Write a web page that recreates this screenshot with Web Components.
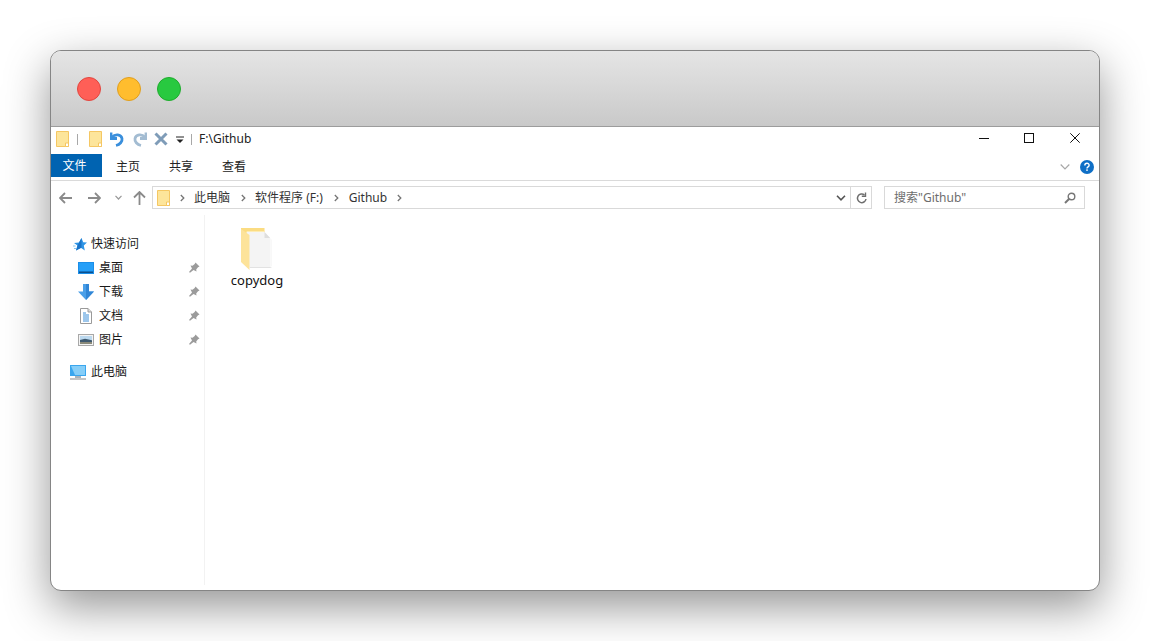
<!DOCTYPE html>
<html lang="zh"><head><meta charset="utf-8"><title>Github</title>
<style>
html,body{margin:0;padding:0;background:#fff;width:1150px;height:641px;overflow:hidden}
body{font:12px/16px "Noto Sans","Noto Sans CJK SC",sans-serif;color:#1a1a1a}
</style></head><body>
<mac-window>
  <quick-bar path="F:\Github"></quick-bar>
  <ribbon-tabs></ribbon-tabs>
  <nav-bar></nav-bar>
  <div style="display:flex;flex:1;min-height:0">
    <side-nav>
      <side-item label="快速访问" icon="star" group></side-item>
      <side-item label="桌面" icon="desktop" pin></side-item>
      <side-item label="下载" icon="download" pin></side-item>
      <side-item label="文档" icon="doc" pin></side-item>
      <side-item label="图片" icon="pic" pin></side-item>
      <side-item label="此电脑" icon="pc" group style="margin-top:8px"></side-item>
    </side-nav>
    <file-area><folder-tile name="copydog"></folder-tile></file-area>
  </div>
</mac-window>
<script>
const FOLDER='<svg width="13" height="16" viewBox="0 0 13 16"><path d="M.5.500h12v15H.5z" fill="#fde59b" stroke="#f5c763"/><path d="M9.500 15.500v-3.500h3v3.500z" fill="#fff" stroke="#f5c763"/></svg>';
const ICONS={
 star:'<svg width="14" height="13" viewBox="0 0 14 13" style="margin-left:3px"><path d="M8.500 0l1.700 4.300 3.800.3-3.200 3 1 4.900-4-2.700L3 12.500l1.500-4.900L1 5l5-.4z" fill="#2f95e6"/><path d="M8.500 0v9.800L3 12.500l1.500-4.900z" fill="#1a74c8"/><path d="M0 8h2.500M1 10.500h2" stroke="#86c8f4"/></svg>',
 desktop:'<svg width="16" height="12" viewBox="0 0 16 12"><rect width="16" height="12" fill="#1b8ee8"/><rect x="1" y="1" width="14" height="8.500" fill="#259ff8"/><rect x="1" y="9.500" width="14" height="1.500" fill="#0b4f8e"/></svg>',
 download:'<svg width="16" height="16" viewBox="0 0 16 16"><path d="M5 0h6v7.500h5L8 16 0 7.500h5z" fill="#4a9fe8"/><path d="M8 0h3v7.500h5L8 16z" fill="#3186d6"/></svg>',
 doc:'<svg width="12" height="16" viewBox="0 0 12 16" style="margin-left:2px"><path d="M.5.500h7.500l3.500 3.500v11.500H.5z" fill="#fff" stroke="#9a9a9a"/><path d="M8 .5v3.500h3.500" fill="#ddd" stroke="#9a9a9a"/><path d="M3 5h3M3 7h6M3 9h6M3 11h6M3 13h6" stroke="#3b8ed8"/></svg>',
 pic:'<svg width="16" height="12" viewBox="0 0 16 12"><rect x=".5" y=".5" width="15" height="11" fill="#f4f4f4" stroke="#a8a8a8"/><rect x="2" y="2" width="12" height="4" fill="#bcd9ef"/><path d="M2 6l5-1.200 7 1.500V10H2z" fill="#3f5a70"/><rect x="2" y="8" width="12" height="2" fill="#8a8a7a"/></svg>',
 pc:'<svg width="16" height="15" viewBox="0 0 16 15"><rect width="16" height="11" fill="#3aa6ee"/><path d="M1 1h14v9H5z" fill="#86cef8"/><rect x="5" y="11" width="6" height="2" fill="#a9b3bb"/><rect y="13" width="16" height="2" fill="#c4c4c4"/></svg>'
};
function def(name,css,html){
  customElements.define(name,class extends HTMLElement{
    connectedCallback(){
      if(this.shadowRoot)return;
      const s=this.attachShadow({mode:'open'});
      s.innerHTML='<style>'+css+'</style>'+(typeof html==='function'?html(this):html);
    }
  });
}
def('mac-window',`
:host{display:flex;flex-direction:column;box-sizing:border-box;width:1050px;height:541px;margin:50px 0 0 50px;background:#fff;border:1px solid #858585;border-radius:11px;box-shadow:0 16px 45px rgba(0,0,0,.42)}
.title{height:76px;flex:none;box-sizing:border-box;border-bottom:1px solid #9c9c9c;border-radius:10px 10px 0 0;background:linear-gradient(#e5e5e5,#c9c9c9);display:flex;align-items:center;gap:16px;padding:1px 0 0 26px}
.d{width:24px;height:24px;box-sizing:border-box;border-radius:50%;border:1px solid}
.r{background:#ff5f57;border-color:#e2463f}.y{background:#ffbd2e;border-color:#e09e1e}.g{background:#28c940;border-color:#1eac2c}
.c{flex:1;display:flex;flex-direction:column;min-height:0;border-radius:0 0 10px 10px;overflow:hidden}
`,`<div class="title"><span class="d r"></span><span class="d y"></span><span class="d g"></span></div><div class="c"><slot></slot></div>`);
def('quick-bar',`
:host{display:flex;align-items:center;height:24px;margin-bottom:3px;flex:none;padding-left:5px;color:#222}
svg{display:block;flex:none}
.sep{width:1px;height:11px;background:#a8a8a8;flex:none}
.ctl{display:flex;margin-left:auto;margin-bottom:1px;align-items:center;padding-right:18px}
span.t{margin-left:7px;white-space:nowrap;font-size:12px}
`,h=>`${FOLDER}<span class="sep" style="margin:0 11px 0 8px"></span>${FOLDER}
<svg style="margin-left:8px" width="14" height="16" viewBox="0 0 14 16"><path d="M1 1.500v6h6" fill="none" stroke="#3a8fdc" stroke-width="2.800"/><path d="M2 6c3-3 9-3 10 1.500 .6 3-2 6-6 7" fill="none" stroke="#3a8fdc" stroke-width="2.800"/></svg>
<svg style="margin-left:9px" width="14" height="16" viewBox="0 0 14 16"><path d="M13 1.500v6H7" fill="none" stroke="#a3bcd2" stroke-width="2.800"/><path d="M12 6C9 3 3 3 2 7.500c-.6 3 2 6 6 7" fill="none" stroke="#a3bcd2" stroke-width="2.800"/></svg>
<svg style="margin-left:7px" width="14" height="14" viewBox="0 0 14 14"><path d="M1.500 1.500l11 11M12.500 1.500l-11 11" stroke="#7f9cb8" stroke-width="3"/></svg>
<svg style="margin-left:8px;margin-top:2px" width="8" height="8" viewBox="0 0 8 8"><path d="M0 1h8" stroke="#222"/><path d="M.5 3.500h7L4 7z" fill="#222"/></svg>
<span class="sep" style="margin-left:7px"></span><span class="t">${h.getAttribute('path')}</span>
<div class="ctl">
<svg style="margin-right:34px" width="11" height="11" viewBox="0 0 11 11"><path d="M0 5.500h10" stroke="#111"/></svg>
<svg style="margin-right:35px" width="11" height="11" viewBox="0 0 11 11"><rect x=".5" y=".5" width="9" height="9" fill="none" stroke="#111"/></svg>
<svg width="11" height="11" viewBox="0 0 11 11"><path d="M.3.300l9.400 9.400M9.700.300l-9.400 9.400" stroke="#111"/></svg>
</div>`);
def('ribbon-tabs',`
:host{display:flex;height:27px;flex:none;box-sizing:border-box;border-bottom:1px solid #dadada;align-items:flex-start;color:#222}
.f{width:51px;height:23px;box-sizing:border-box;padding:1px 4px 0 0;background:#0063b1;color:#fff;display:flex;align-items:center;justify-content:center;margin-right:14px}
.t{height:26px;display:flex;align-items:center;margin-right:29px;white-space:nowrap}
.r{margin-left:auto;display:flex;align-items:center;gap:10px;padding-right:5px;height:26px}
`,`<div class="f">文件</div><div class="t">主页</div><div class="t">共享</div><div class="t">查看</div>
<div class="r"><svg width="10" height="6" viewBox="0 0 10 6"><path d="M.7.500L5 4.800 9.300.500" fill="none" stroke="#a8a8a8" stroke-width="1.200"/></svg>
<svg width="14" height="14" viewBox="0 0 15 15"><circle cx="7.500" cy="7.500" r="7.500" fill="#0f6fc6"/><path d="M5.200 5.800c0-3 4.600-3 4.600-.2 0 1.700-2.300 1.800-2.300 3.400" fill="none" stroke="#fff" stroke-width="1.500"/><rect x="6.700" y="10" width="1.600" height="1.700" fill="#fff"/></svg></div>`);
def('nav-bar',`
:host{display:flex;align-items:center;height:23px;flex:none;margin-top:5px;padding-right:14px;color:#333}
svg{display:block;flex:none}
.addr{display:flex;align-items:center;box-sizing:border-box;width:720px;height:23px;border:1px solid #d9d9d9;margin-left:6px}
.s{margin-left:12px;box-sizing:border-box;flex:1;height:23px;border:1px solid #d9d9d9;display:flex;align-items:center;padding:0 8px 0 9px;color:#6d6d6d}
.s svg{margin-left:auto}
.x{white-space:nowrap}
.v{width:1px;height:21px;background:#d9d9d9}
`,()=>{
 const chev='<svg width="5" height="8" viewBox="0 0 5 8"><path d="M.8 1L3.800 4 .8 7" fill="none" stroke="#777" stroke-width="1.300"/></svg>';
 return `<svg style="margin-left:8px" width="13" height="12" viewBox="0 0 13 12"><path d="M6 1L1 6l5 5M1 6h12" fill="none" stroke="#8a8a8a" stroke-width="1.800"/></svg>
<svg style="margin-left:16px" width="13" height="12" viewBox="0 0 13 12"><path d="M7 1l5 5-5 5M12 6H0" fill="none" stroke="#8a8a8a" stroke-width="1.800"/></svg>
<svg style="margin-left:14px" width="7" height="5" viewBox="0 0 7 5"><path d="M.5.800L3.500 4 6.500.800" fill="none" stroke="#999" stroke-width="1.200"/></svg>
<svg style="margin-left:11px" width="13" height="14" viewBox="0 0 13 14"><path d="M1 6.500l5.500-5.500L12 6.500M6.500 1v13" fill="none" stroke="#8a8a8a" stroke-width="1.800"/></svg>
<div class="addr"><span style="margin-left:4px;display:flex">${FOLDER}</span>
<span style="margin-left:10px;display:flex">${chev}</span><span class="x" style="margin-left:9px">此电脑</span>
<span style="margin-left:11px;display:flex">${chev}</span><span class="x" style="margin-left:9px">软件程序 (F:)</span>
<span style="margin-left:11px;display:flex">${chev}</span><span class="x" style="margin-left:10px">Github</span>
<span style="margin-left:10px;display:flex">${chev}</span>
<svg style="margin-left:auto" width="10" height="6" viewBox="0 0 10 6"><path d="M1 .8L5 4.800 9 .8" fill="none" stroke="#555" stroke-width="1.600"/></svg><span class="v" style="margin:0 5px 0 4px"></span>
<svg style="margin-right:4px" width="11" height="12" viewBox="0 0 11 12"><path d="M8.500 3A4.300 4.300 0 1 0 10 7" fill="none" stroke="#6f6f6f" stroke-width="1.500"/><path d="M9.500 .5v3.800H5.800" fill="none" stroke="#6f6f6f" stroke-width="1.400"/></svg></div>
<div class="s"><span class="x">搜索"Github"</span><svg width="12" height="12" viewBox="0 0 12 12"><circle cx="7.500" cy="4.500" r="3.300" fill="none" stroke="#777" stroke-width="1.400"/><path d="M5 7L1 11" stroke="#777" stroke-width="2"/></svg></div>`});
def('side-nav',`
:host{display:block;box-sizing:border-box;width:154px;flex:none;border-right:1px solid #f2f2f2;margin-top:6px;margin-bottom:5px;padding-top:17px}
`,'<slot></slot>');
def('side-item',`
:host{display:flex;align-items:center;height:24px;color:#1a1a1a;position:relative;white-space:nowrap}
.i{width:17px;display:flex;flex:none;margin-right:4px}
.i svg{display:block;flex:none}
.p{position:absolute;left:138px;top:6px}
`,h=>{
 const g=h.hasAttribute('group');
 const pin=h.hasAttribute('pin')?'<svg class="p" width="11" height="11" viewBox="0 0 11 11"><path d="M6.500.500l4 4-1.500.8-1.800 2.200.3 2L4.500 8 1 10.800 0 10l3-3.500L1.500 3.500l2 .3L5.700 2z" fill="#9b9b9b"/></svg>':'';
 return `<span class="i" style="margin-left:${g?19:27}px">${ICONS[h.getAttribute('icon')]}</span><span>${h.getAttribute('label')}</span>${pin}`;
});
def('file-area',`:host{display:block;flex:1;padding:19px 0 0 26px}`,'<slot></slot>');
def('folder-tile',`
:host{display:inline-flex;flex-direction:column;align-items:center;width:52px;white-space:nowrap}
svg{display:block}
span{margin-top:1px;font-size:13px;color:#111}
`,h=>`<svg width="32" height="43" viewBox="0 0 34 43" preserveAspectRatio="none"><path d="M0 0h25v6H0z" fill="#fbdc82"/><path d="M6 3h19v31H6z" fill="#fdecb4"/><path d="M6 4h19l6 6v29H6z" fill="#f4f4f4"/><path d="M25 4l6 6h-6z" fill="#dedede"/><path d="M31 10l2 2v26l-2 1z" fill="#f8f8f8"/><path d="M0 1v33l9 8V7z" fill="#fde39a"/><path d="M9 39h22l2 0-2 1H9z" fill="#e2e2e2"/></svg><span>${h.getAttribute('name')}</span>`);
</script>
</body></html>
